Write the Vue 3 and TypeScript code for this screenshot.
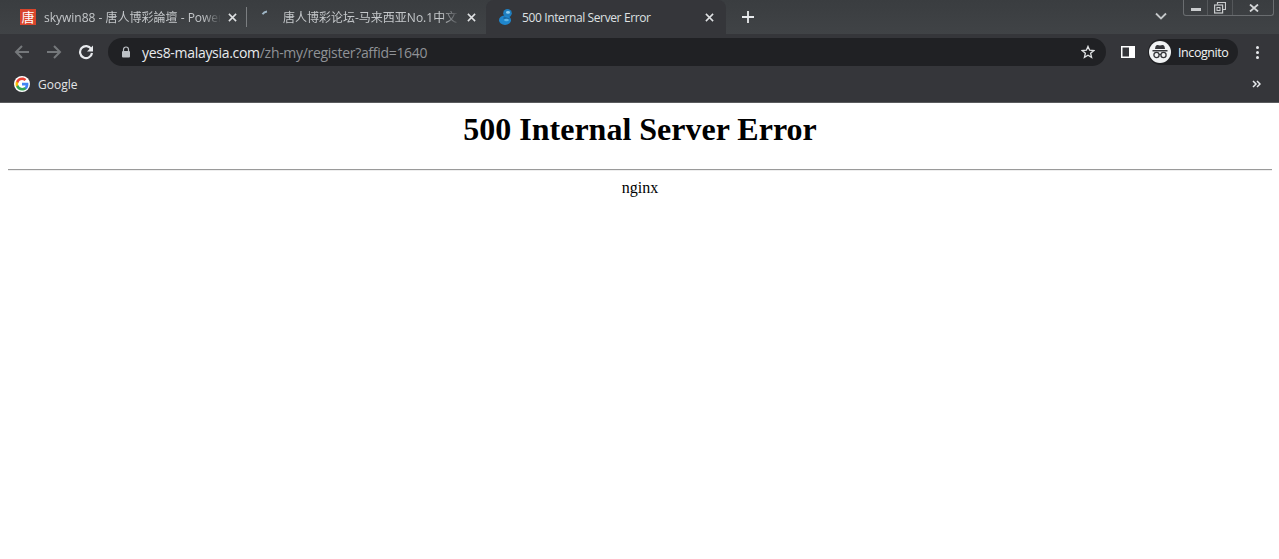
<script setup lang="ts">
interface Tab { title: string; kind: string; active?: boolean }
const tabs: Tab[] = [
  { title: 'skywin88 - 唐人博彩論壇 - Power', kind: 'red' },
  { title: '唐人博彩论坛-马来西亚No.1中文', kind: 'spin' },
  { title: '500 Internal Server Error', kind: 'blue', active: true }
]
</script>

<template>
  <div class="browser">
    <header class="chrome">
      <div class="strip">
        <div class="tabs">
          <div v-for="t in tabs" :key="t.kind" class="tab" :class="[t.kind, { active: t.active }]">
            <span v-if="t.kind === 'red'" class="fav-red">唐</span>
            <svg v-else-if="t.kind === 'spin'" class="fav" viewBox="0 0 16 16"><path d="M3.500 5.200C4.600 3.600 6.200 2.800 8 2.600" fill="none" stroke="#9fb6c6" stroke-width="2"/></svg>
            <svg v-else class="fav" viewBox="0 0 16 16">
              <ellipse cx="9.500" cy="4.200" rx="4.300" ry="4.200" fill="#1f7fc0"/>
              <ellipse cx="7" cy="11.200" rx="6" ry="4.800" fill="#1f86cc"/>
              <path d="M6 7.500l6 2-2 2-5-2z" fill="#1a6ba6"/>
              <ellipse cx="10" cy="3.400" rx="2" ry="1.300" fill="#8ecdf0"/>
              <ellipse cx="8.500" cy="11" rx="2.400" ry="1.300" fill="#5cb4e6"/>
            </svg>
            <span class="title">{{ t.title }}</span>
            <svg class="close" viewBox="0 0 10 10"><path d="M1 1l8 8M9 1l-8 8" stroke="currentColor" stroke-width="1.700" fill="none"/></svg>
          </div>
        </div>
        <svg class="plus" viewBox="0 0 12 12"><path d="M6 0v12M0 6h12" stroke="#e8eaed" stroke-width="1.800"/></svg>
        <svg class="chev" viewBox="0 0 12 8"><path d="M1 1.500l5 5 5-5" stroke="#c4c7c9" stroke-width="1.800" fill="none"/></svg>
        <div class="winctl">
          <div class="wbtn min"><span></span></div>
          <div class="wbtn max">
            <svg viewBox="0 0 12 12" width="12" height="12"><path d="M3.500 2.500V.5h8v7h-2.500" fill="none" stroke="#c9cbcd" stroke-width="1.200"/><rect x=".6" y="3" width="8" height="8" fill="none" stroke="#c9cbcd" stroke-width="1.200"/><rect x="3" y="5.500" width="3" height="3" fill="none" stroke="#c9cbcd"/></svg>
          </div>
          <div class="wbtn cls">
            <svg viewBox="0 0 10 8" width="10" height="8"><path d="M1 .5l8 7M9 .5l-8 7" stroke="#d4d6d8" stroke-width="1.800" fill="none"/></svg>
          </div>
        </div>
      </div>

      <div class="toolbar">
        <svg class="nav first" viewBox="0 0 16 16"><path d="M15 8H2M8 2L2 8l6 6" stroke="#75787b" stroke-width="2" fill="none"/></svg>
        <svg class="nav" viewBox="0 0 16 16"><path d="M1 8h13M8 2l6 6-6 6" stroke="#75787b" stroke-width="2" fill="none"/></svg>
        <svg class="nav" viewBox="0 0 16 16"><path d="M13.200 5A6 6 0 1 0 14 9" stroke="#e8eaed" stroke-width="2.200" fill="none"/><path d="M15 1.500v6h-6z" fill="#e8eaed"/></svg>
        <div class="omni">
          <svg class="lock" viewBox="0 0 10 12"><path d="M2.500 5V3.500a2.500 2.500 0 0 1 5 0V5" stroke="#bdc1c6" stroke-width="1.200" fill="none"/><rect x="1" y="5" width="8" height="6.500" rx="1" fill="#bdc1c6"/></svg>
          <span class="url"><b>yes8-malaysia.com</b>/zh-my/register?affid=1640</span>
          <svg class="star" viewBox="0 0 16 16"><path d="M8 1.600l1.900 4.400 4.700.4-3.600 3.100 1.100 4.700L8 11.700l-4.100 2.500L5 9.500 1.400 6.400l4.700-.4z" fill="none" stroke="#e0e2e4" stroke-width="1.500"/></svg>
        </div>
        <svg class="side" viewBox="0 0 14 12"><rect width="14" height="12" fill="#fff"/><rect x="1.500" y="1.500" width="6.500" height="9" fill="#35363a"/></svg>
        <div class="pill">
          <span class="avatar">
            <svg viewBox="0 0 18 16" width="18" height="16">
              <path d="M4.500 2.500Q5 .8 6.500 1l2.500.5L11.500 1Q13 .8 13.500 2.500L14 5H4z" fill="#35363a"/>
              <rect x="1.500" y="6" width="15" height="1.500" fill="#35363a"/>
              <circle cx="5.500" cy="11" r="2.600" fill="none" stroke="#35363a" stroke-width="1.300"/>
              <circle cx="12.500" cy="11" r="2.600" fill="none" stroke="#35363a" stroke-width="1.300"/>
              <path d="M8 10.500h2" stroke="#35363a" stroke-width="1.200"/>
            </svg>
          </span>
          <span class="inc">Incognito</span>
        </div>
        <div class="dots"><i></i><i></i><i></i></div>
      </div>

      <div class="bookmarks">
        <div class="bm">
          <svg class="g" viewBox="0 0 16 16">
            <circle cx="8" cy="8" r="8" fill="#fff"/>
            <path d="M14.400 8.200c0-.5 0-1-.1-1.400H8v2.700h3.600c-.2.900-.6 1.600-1.300 2.100v1.700h2.100c1.300-1.100 2-2.900 2-5.100z" fill="#4285f4"/>
            <path d="M8 14.500c1.800 0 3.300-.6 4.400-1.600l-2.100-1.700c-.6.400-1.400.7-2.300.7-1.700 0-3.200-1.200-3.700-2.800H2.100v1.700C3.200 13 5.400 14.500 8 14.500z" fill="#34a853"/>
            <path d="M4.300 9.100c-.3-.7-.3-1.500 0-2.200V5.200H2.100c-.8 1.500-.8 4 0 5.600z" fill="#fbbc05"/>
            <path d="M8 4.100c1 0 1.800.3 2.500 1l1.900-1.900C11.300 2.100 9.800 1.500 8 1.500 5.400 1.500 3.200 3 2.100 5.200l2.200 1.700C4.800 5.300 6.300 4.100 8 4.100z" fill="#ea4335"/>
          </svg>
          <span>Google</span>
        </div>
        <svg class="more" viewBox="0 0 9 8"><path d="M1 1l3 3-3 3M5 1l3 3-3 3" stroke="#e8eaed" stroke-width="1.500" fill="none"/></svg>
      </div>
    </header>

    <main class="page">
      <h1>500 Internal Server Error</h1>
      <hr />
      <p>nginx</p>
    </main>
  </div>
</template>

<style>
html, body { margin: 0; background: #fff; overflow: hidden; }
</style>

<style scoped>
.browser { width: 1279px; height: 559px; overflow: hidden; display: flex; flex-direction: column; background: #fff; }
.chrome { font-family: "Open Sans", "Noto Sans CJK SC", sans-serif; flex: none; }

.strip { height: 34px; background: linear-gradient(#3a3d40, #404346); display: flex; align-items: flex-start; box-sizing: border-box; }
.tabs { display: flex; height: 34px; flex: none; }
.tab { height: 34px; display: flex; align-items: center; box-sizing: border-box; color: #c4c7ca; font-size: 12px; position: relative; }
.tab.red { width: 247px; padding: 0 8px 0 20px; }
.tab.spin { width: 239px; padding: 0 8px 0 12px; }
.tab.blue { width: 240px; padding: 0 10px 0 12px; background: #35363a; border-radius: 8px 8px 0 0; color: #dfe1e3; }
.tab.red::after { content: ""; position: absolute; right: 0; top: 7px; height: 20px; width: 1px; background: #7b7e81; }
.fav-red { width: 16px; height: 16px; flex: none; background: #d9452c; color: #fff; font-size: 13px; line-height: 16px; text-align: center; overflow: hidden; }
.fav { width: 16px; height: 16px; flex: none; }
.title { flex: 1; min-width: 0; white-space: nowrap; overflow: hidden; margin-left: 8px; -webkit-mask-image: linear-gradient(to left, transparent 0, #000 18px); mask-image: linear-gradient(to left, transparent 0, #000 18px); }
.tab.spin .title { margin-left: 8px; padding-left: 0; }
.tab.blue .title { margin-left: 8px; mask-image: none; -webkit-mask-image: none; letter-spacing: -0.38px; }
.close { width: 9px; height: 9px; flex: none; margin-left: 7px; color: #dfe1e3; margin-right: 2px; }
.plus { width: 12px; height: 12px; margin: 11px 0 0 16px; flex: none; }
.chev { width: 12px; height: 8px; margin: 12px 0 0 401px; flex: none; }
.winctl { display: flex; height: 16px; margin-left: 16px; border: 1px solid #6a6d70; border-top: 0; border-radius: 0 0 3px 3px; box-sizing: border-box; width: 91px; flex: none; }
.wbtn { display: flex; align-items: center; justify-content: center; height: 15px; box-sizing: border-box; }
.min { width: 24px; border-right: 1px solid #55585b; }
.min span { width: 10px; height: 3px; background: #c9cbcd; margin-top: 4px; }
.max { width: 25px; border-right: 1px solid #55585b; }
.cls { flex: 1; padding-left: 2px; }

.toolbar { height: 36px; background: #35363a; display: flex; align-items: center; box-sizing: border-box; }
.nav { width: 16px; height: 16px; margin-left: 16px; flex: none; }
.nav.first { margin-left: 14px; }
.omni { width: 998px; height: 28px; margin-left: 14px; border-radius: 14px; background: #202124; display: flex; align-items: center; box-sizing: border-box; padding: 0 11px 0 13px; flex: none; }
.lock { width: 10px; height: 12px; flex: none; }
.url { flex: 1; margin-left: 11px; font-size: 14px; color: #8f9296; white-space: nowrap; letter-spacing: -0.3px; }
.url b { font-weight: 400; color: #e8eaed; }
.star { width: 14px; height: 14px; flex: none; }
.side { width: 14px; height: 12px; margin-left: 15px; flex: none; }
.pill { width: 90px; height: 26px; margin-left: 13px; border-radius: 13px; background: #202124; display: flex; align-items: center; padding-left: 1px; box-sizing: border-box; flex: none; }
.avatar { width: 22px; height: 22px; border-radius: 50%; background: #f1f3f4; display: flex; align-items: center; justify-content: center; flex: none; }
.inc { margin-left: 7px; font-size: 12.500px; color: #f1f3f4; letter-spacing: -0.42px; }
.dots { display: flex; flex-direction: column; gap: 2px; margin-left: 18px; flex: none; }
.dots i { width: 3px; height: 3px; border-radius: 50%; background: #e8eaed; display: block; }

.bookmarks { height: 33px; background: #35363a; border-bottom: 1px solid #5a5b5e; display: flex; align-items: center; justify-content: space-between; box-sizing: border-box; padding: 0 18px 4px 14px; }
.bm { display: flex; align-items: center; color: #e3e5e7; font-size: 12px; }
.g { width: 16px; height: 16px; margin-right: 8px; }
.more { width: 9px; height: 8px; }

.page { flex: 1; background: #fff; color: #000; font-family: "Liberation Serif", "Times New Roman", serif; padding: 8px 7px 0 8px; font-size: 16px; }
h1 { margin: 0 0 21.440px; font-size: 32px; font-weight: 700; text-align: center; line-height: 37px; }
hr { margin: 8px 0; border: 0; height: 0; border-top: 1px solid #9a9a9a; border-bottom: 1px solid #eee; }
p { margin: 0; text-align: center; line-height: 18px; }
</style>
